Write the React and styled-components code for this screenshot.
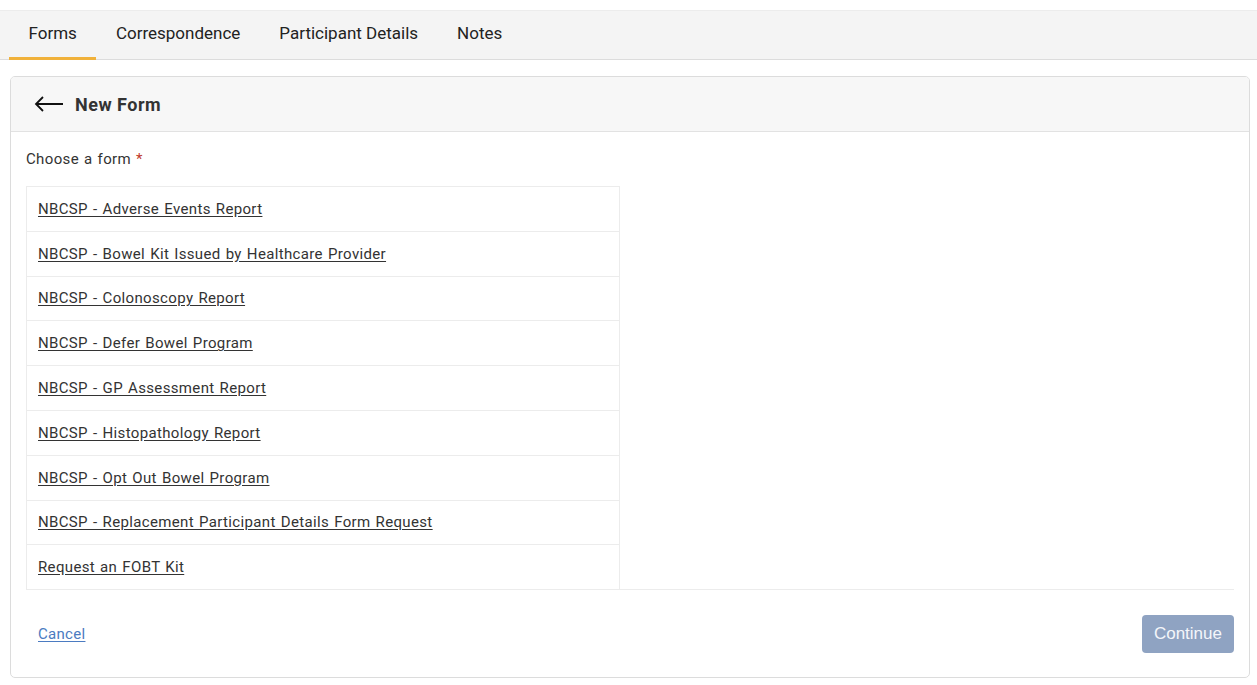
import React from 'react'
import styled, { createGlobalStyle } from 'styled-components'

const GlobalStyle = createGlobalStyle`
  body {
    margin: 0;
    background: #fff;
    font-family: Roboto, "Liberation Sans", Arial, sans-serif;
    color: #333;
  }
`

const Page = styled.div`
  padding-top: 10px;
  width: 1257px;
`

const TabBar = styled.div`
  display: flex;
  height: 50px;
  box-sizing: border-box;
  background: #f4f4f4;
  border-top: 1px solid #ececec;
  border-bottom: 1px solid #dcdcdc;
  padding-left: 9px;
`

const Tab = styled.div`
  display: flex;
  align-items: center;
  padding: 0 19.5px 3px;
  font-size: 17px;
  color: #222;
  border-bottom: 3px solid ${p => (p.active ? '#f0b13a' : 'transparent')};
  margin-bottom: -1px;
`

const Card = styled.div`
  margin: 16px 7px 0 10px;
  border: 1px solid #dcdcdc;
  border-radius: 5px;
  background: #fff;
  overflow: hidden;
`

const CardHeader = styled.div`
  display: flex;
  align-items: center;
  gap: 11px;
  height: 54px;
  padding-left: 23px;
  background: #f7f7f7;
  border-bottom: 1px solid #e2e2e2;
  font-size: 18px;
  font-weight: 700;
  letter-spacing: 0.5px;
  color: #333;
`

const CardBody = styled.div`
  padding: 0 15px;
`

const Label = styled.div`
  font-size: 15px;
  letter-spacing: 0.35px;
  word-spacing: 1px;
  color: #333;
  padding: 18px 0 18px;
  span { color: #c0392b; }
`

const FormList = styled.div`
  width: 592px;
  border: 1px solid #ececec;
  border-bottom: none;
`

const FormRow = styled.div`
  height: 43.8px;
  display: flex;
  align-items: center;
  padding-left: 11px;
  border-bottom: 1px solid #ececec;
  font-size: 15px;
  letter-spacing: 0.35px;
  word-spacing: 1px;

  a {
    color: #333;
    text-decoration: underline;
    text-underline-offset: 2px;
  }
`

const Rule = styled.div`
  border-top: 1px solid #ececec;
  margin-top: -1px;
`

const Footer = styled.div`
  display: flex;
  align-items: center;
  justify-content: space-between;
  padding: 25px 0 24px 12px;
`

const CancelLink = styled.a`
  font-size: 15px;
  letter-spacing: 0.3px;
  color: #4b7bc1;
  text-decoration: underline;
  text-underline-offset: 2px;
`

const ContinueButton = styled.button`
  height: 38px;
  padding: 0 12px;
  background: #8fa3c2;
  border: none;
  border-radius: 4px;
  color: #f4f6fa;
  font-family: "Liberation Sans", Arial, sans-serif;
  font-size: 17px;
`

const forms = [
  'NBCSP - Adverse Events Report',
  'NBCSP - Bowel Kit Issued by Healthcare Provider',
  'NBCSP - Colonoscopy Report',
  'NBCSP - Defer Bowel Program',
  'NBCSP - GP Assessment Report',
  'NBCSP - Histopathology Report',
  'NBCSP - Opt Out Bowel Program',
  'NBCSP - Replacement Participant Details Form Request',
  'Request an FOBT Kit',
]

const BackArrow = () => (
  <svg width="30" height="16" viewBox="0 0 30 16" fill="none">
    <path d="M29 8H2M9 1L2 8l7 7" stroke="#111" strokeWidth="1.8" />
  </svg>
)

export default function App () {
  return (
    <Page>
      <GlobalStyle />
      <TabBar>
        <Tab active>Forms</Tab>
        <Tab>Correspondence</Tab>
        <Tab>Participant Details</Tab>
        <Tab>Notes</Tab>
      </TabBar>
      <Card>
        <CardHeader>
          <BackArrow />
          New Form
        </CardHeader>
        <CardBody>
          <Label>Choose a form <span>*</span></Label>
          <FormList>
            {forms.map((f, i) => (
              <FormRow key={i}><a href="#">{f}</a></FormRow>
            ))}
          </FormList>
          <Rule />
          <Footer>
            <CancelLink href="#">Cancel</CancelLink>
            <ContinueButton disabled>Continue</ContinueButton>
          </Footer>
        </CardBody>
      </Card>
    </Page>
  )
}
